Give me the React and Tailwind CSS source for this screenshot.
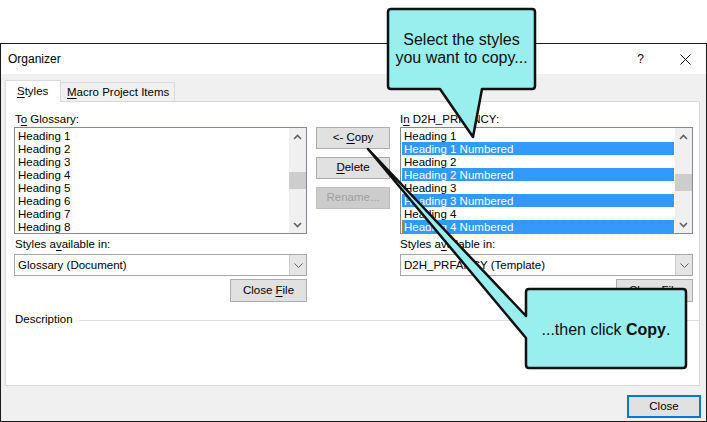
import React from 'react';

const Chevron = ({ dir = 'down', className = '' }) => (
  <svg width="9" height="6" viewBox="0 0 9 6" className={className}>
    {dir === 'up' ? (
      <path d="M1 5 L4.5 1.5 L8 5" fill="none" stroke="#606060" strokeWidth="1.6" />
    ) : (
      <path d="M1 1 L4.5 4.5 L8 1" fill="none" stroke="#606060" strokeWidth="1.6" />
    )}
  </svg>
);

const ScrollBar = ({ thumbTop }) => (
  <div className="w-[17px] bg-[#f0f0f0] flex flex-col relative">
    <div className="h-[17px] flex items-center justify-center">
      <Chevron dir="up" />
    </div>
    <div className="flex-1" />
    <div className="h-[17px] flex items-center justify-center">
      <Chevron dir="down" />
    </div>
    <div className="absolute left-0 w-[17px] h-[17px] bg-[#cdcdcd]" style={{ top: thumbTop }} />
  </div>
);

const ListBox = ({ items, thumbTop }) => (
  <div className="h-[107px] border border-[#828790] bg-white flex">
    <div className="flex-1 p-[1px] overflow-hidden">
      {items.map((it, i) => (
        <div
          key={i}
          className={
            'h-[13px] leading-[14px] pl-[2px] whitespace-nowrap ' +
            (it.sel ? 'bg-[#3399ff] text-white ' : '') +
            (it.focus ? 'outline outline-1 outline-dotted outline-offset-[-1px] outline-[#c8793a]' : '')
          }
        >
          {it.label}
        </div>
      ))}
    </div>
    <ScrollBar thumbTop={thumbTop} />
  </div>
);

const Combo = ({ value }) => (
  <div className="h-[22px] border border-[#a6a6a6] bg-white flex">
    <div className="flex-1 pl-[3px] leading-[20px]">{value}</div>
    <div className="w-[17px] bg-[#e5e5e5] border-l border-[#cccccc] flex items-center justify-center">
      <svg width="9" height="5" viewBox="0 0 9 5">
        <path d="M0.5 0.5 L4.5 4.5 L8.5 0.5" fill="none" stroke="#606060" strokeWidth="1" />
      </svg>
    </div>
  </div>
);

const Btn = ({ children, disabled, className = '' }) => (
  <div
    className={
      'h-[22px] border flex items-center justify-center leading-none ' +
      (disabled ? 'bg-[#cccccc] border-[#bfbfbf] text-[#a0a0a0] ' : 'bg-[#e1e1e1] border-[#adadad] ') +
      className
    }
  >
    <span>{children}</span>
  </div>
);

const U = ({ children }) => <span className="underline underline-offset-2">{children}</span>;

export default function App() {
  const left = ['Heading 1', 'Heading 2', 'Heading 3', 'Heading 4', 'Heading 5', 'Heading 6', 'Heading 7', 'Heading 8'].map(
    (l) => ({ label: l })
  );
  const right = [
    { label: 'Heading 1' },
    { label: 'Heading 1 Numbered', sel: true },
    { label: 'Heading 2' },
    { label: 'Heading 2 Numbered', sel: true },
    { label: 'Heading 3' },
    { label: 'Heading 3 Numbered', sel: true },
    { label: 'Heading 4' },
    { label: 'Heading 4 Numbered', sel: true, focus: true },
  ];

  return (
    <div className="w-[707px] h-[422px] bg-white relative overflow-hidden font-['Segoe_UI','Liberation_Sans',Arial,sans-serif] text-[11.5px] text-black">
      <div className="pt-[43px]">
        <div className="w-[707px] h-[379px] border border-[#1a1a1a] flex flex-col">
          {/* title bar */}
          <div className="h-[30px] bg-white flex items-center pl-[7px] pr-[15px]">
            <span className="text-[12px]">Organizer</span>
            <span className="ml-auto text-[12px] mr-[36px]">?</span>
            <svg width="11" height="11" viewBox="0 0 11 11">
              <path d="M0.5 0.5 L10.5 10.5 M10.5 0.5 L0.5 10.5" stroke="#000" strokeWidth="1" />
            </svg>
          </div>

          {/* body */}
          <div className="flex-1 bg-[#f0f0f0] pl-[4px] pt-[6px]">
            {/* tabs */}
            <div className="flex items-end h-[21px]">
              <div className="w-[56px] h-[22px] mb-[-1px] bg-white border-t border-l border-r border-[#d9d9d9] relative z-10 pl-[11px] leading-[20px]">
                <U>S</U>tyles
              </div>
              <div className="w-[114px] h-[19px] border-t border-r border-[#d9d9d9] pl-[6px] leading-[18px]">
                <U>M</U>acro Project Items
              </div>
            </div>

            {/* panel */}
            <div className="w-[695px] h-[285px] bg-white border border-[#d9d9d9] pl-[8px] pt-[9px]">
              <div className="flex">
                {/* left */}
                <div className="w-[293px] flex flex-col">
                  <div className="h-[16px] leading-[16px] pl-[1px]">
                    T<U>o</U> Glossary:
                  </div>
                  <ListBox items={left} thumbTop={44} />
                  <div className="h-[20px] leading-[20px] pl-[1px]">
                    Styles a<U>v</U>ailable in:
                  </div>
                  <Combo value="Glossary (Document)" />
                  <Btn className="self-end w-[77px] h-[23px] mt-[3px]">
                    Close <U>F</U>ile
                  </Btn>
                </div>

                {/* middle */}
                <div className="w-[74px] ml-[9px] pt-[16px] flex flex-col gap-[8px]">
                  <Btn>
                    &lt;- <U>C</U>opy
                  </Btn>
                  <Btn>
                    <U>D</U>elete
                  </Btn>
                  <Btn disabled>Rename...</Btn>
                </div>

                {/* right */}
                <div className="w-[293px] ml-[10px] flex flex-col">
                  <div className="h-[16px] leading-[16px]">
                    I<U>n</U> D2H_PRFANCY:
                  </div>
                  <ListBox items={right} thumbTop={46} />
                  <div className="h-[20px] leading-[20px]">
                    Styles a<U>v</U>ailable in:
                  </div>
                  <Combo value="D2H_PRFANCY (Template)" />
                  <Btn className="self-end w-[77px] h-[23px] mt-[3px]">
                    Close <U>F</U>ile
                  </Btn>
                </div>
              </div>

              {/* description */}
              <div className="flex items-center mt-[10px] h-[16px] pl-[1px]">
                <span>Description</span>
                <div className="flex-1 h-px bg-[#dcdcdc] ml-[6px]" />
              </div>
            </div>

            {/* bottom */}
            <div className="flex justify-end pr-[5px] pt-[9px]">
              <div className="w-[74px] h-[23px] border-2 border-[#0078d7] bg-[#e1e1e1] flex items-center justify-center">
                Close
              </div>
            </div>
          </div>
        </div>
      </div>

      {/* callouts */}
      <svg className="absolute inset-0" width="707" height="422" viewBox="0 0 707 422">
        <path
          d="M391 9 H532 Q535 9 535 12 V86 Q535 89 532 89 H482 L473 137 L440 89 H391 Q388 89 388 86 V12 Q388 9 391 9 Z"
          fill="#99eeee"
          stroke="#111"
          strokeWidth="2.5"
          strokeLinejoin="round"
        />
        <path
          d="M529 289 H683 Q686 289 686 292 V365 Q686 368 683 368 H529 Q526 368 526 365 V338 L368 149 L526 316 V292 Q526 289 529 289 Z"
          fill="#99eeee"
          stroke="#111"
          strokeWidth="2.5"
          strokeLinejoin="round"
        />
      </svg>
      <div className="absolute left-[388px] top-[31px] w-[147px] text-center font-['Liberation_Sans',Arial,sans-serif] text-[16px] leading-[18px] text-[#111]">
        Select the styles
        <br />
        you want to copy...
      </div>
      <div className="absolute left-[526px] top-[321px] w-[160px] text-center font-['Liberation_Sans',Arial,sans-serif] text-[16px] leading-[18px] text-[#111]">
        ...then click <b>Copy</b>.
      </div>
    </div>
  );
}
